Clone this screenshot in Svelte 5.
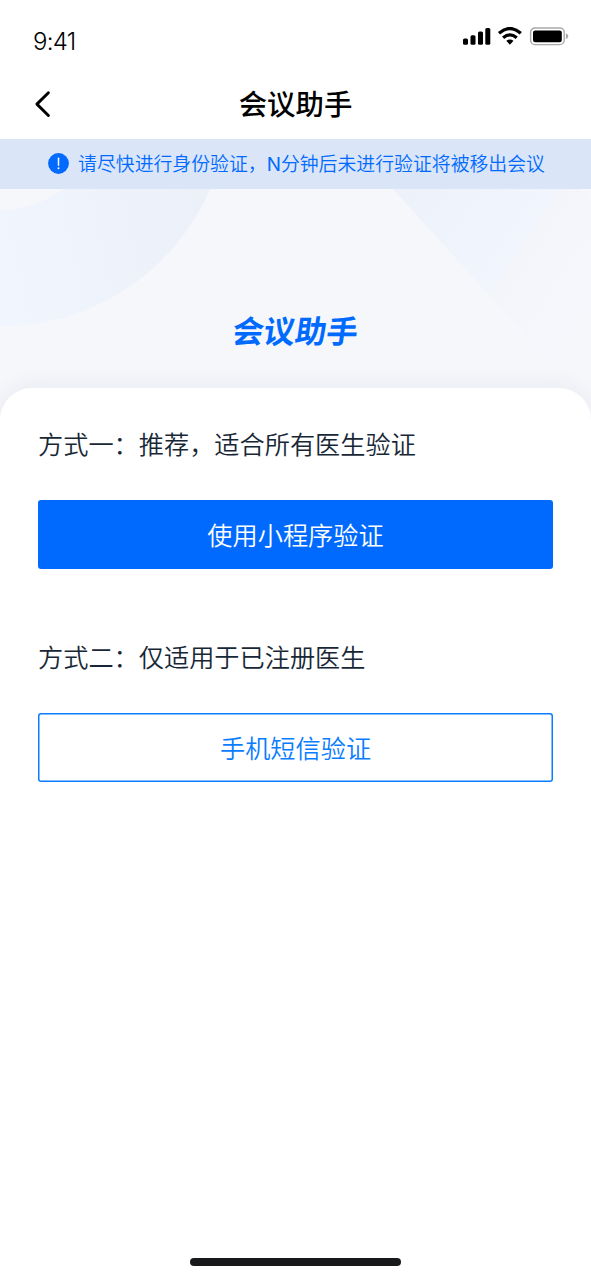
<script>
  const methods = [
    { label: '方式一：推荐，适合所有医生验证', action: '使用小程序验证', primary: true },
    { label: '方式二：仅适用于已注册医生', action: '手机短信验证', primary: false }
  ];
</script>

<div class="screen">
  <header>
    <div class="status">
      <span class="time">9:41</span>
      <svg class="indicators" width="108" height="20" viewBox="0 0 108 20">
        <rect x="1" y="11.5" width="5" height="6.2" rx="1.5" />
        <rect x="8.5" y="8.3" width="5" height="9.4" rx="1.5" />
        <rect x="16" y="4.6" width="5" height="13.1" rx="1.5" />
        <rect x="23.3" y="1" width="5" height="16.7" rx="1.5" />
        <g fill="none" stroke="#000" stroke-width="3.3">
          <path d="M37 6.3Q47.9 -3.2 58.8 6.3" />
          <path d="M41.1 10.8Q47.9 4.9 54.7 10.8" />
        </g>
        <path d="M44.3 13.8Q47.9 11 51.5 13.8L47.9 17.7Z" />
        <rect x="68.6" y="1" width="33.6" height="16.6" rx="4.3" fill="none" stroke="#a9a9a9" stroke-width="1.4" />
        <rect x="71" y="3.4" width="28.8" height="11.9" rx="2.2" />
        <path d="M103.9 6.3Q106.2 7.2 106.2 9.3T103.9 12.3Z" fill="#a9a9a9" />
      </svg>
    </div>
    <div class="nav">
      <svg class="back" width="18" height="28" viewBox="0 0 18 28">
        <path d="M15.4 2.8L3.9 14.1L15.4 25.5" fill="none" stroke="#000" stroke-width="2.9" stroke-linecap="round" stroke-linejoin="round" />
      </svg>
      <h1>会议助手</h1>
    </div>
  </header>

  <div class="notice">
    <svg width="21" height="21" viewBox="0 0 21 21">
      <circle cx="10.5" cy="10.5" r="10.4" fill="#006aff" />
      <path d="M10.5 5.2V12.3" stroke="#fff" stroke-width="1.5" stroke-linecap="round" />
      <circle cx="10.5" cy="15.3" r="1" fill="#fff" />
    </svg>
    <span class="notice-text">请尽快进行身份验证，<span class="latin">N</span>分钟后未进行验证将被移出会议</span>
  </div>

  <section class="hero">
    <svg class="shapes" width="591" height="240" viewBox="0 189 591 240">
      <defs>
        <linearGradient id="ring" gradientUnits="userSpaceOnUse" x1="10" y1="300" x2="210" y2="260">
          <stop offset="0" stop-color="#f1f5fe" />
          <stop offset="0.55" stop-color="#eef3fb" />
          <stop offset="1" stop-color="#ecf0f9" />
        </linearGradient>
        <linearGradient id="wedge" gradientUnits="userSpaceOnUse" x1="393" y1="189" x2="594" y2="320">
          <stop offset="0" stop-color="#edf1fa" />
          <stop offset="0.3" stop-color="#eff3fb" />
          <stop offset="0.56" stop-color="#f1f5fe" />
          <stop offset="0.58" stop-color="#f3f5fa" />
          <stop offset="0.77" stop-color="#f4f6fb" />
          <stop offset="1" stop-color="#f5f7fb" />
        </linearGradient>
      </defs>
      <path d="M63 189H210A226 226 0 0 1 0 326V210A111 111 0 0 0 63 189Z" fill="url(#ring)" />
      <path d="M393 189H578L591 202V330L564 370Q559 373 553 365Z" fill="url(#wedge)" />
    </svg>
    <h2>会议助手</h2>
  </section>

  <main>
    {#each methods as method}
      <div class="method">
        <p>{method.label}</p>
        <button class:primary={method.primary}>{method.action}</button>
      </div>
    {/each}
  </main>

  <footer><div class="home"></div></footer>
</div>

<style>
  :global(body) {
    margin: 0;
    background: #fff;
  }
  .screen {
    display: flex;
    flex-direction: column;
    width: 591px;
    height: 1280px;
    overflow: hidden;
    font-family: 'Noto Sans CJK SC', sans-serif;
    background: #fff;
  }
  header {
    height: 139px;
    flex: none;
  }
  .status {
    display: flex;
    justify-content: space-between;
    height: 70px;
    padding: 0 21px 0 33px;
    box-sizing: border-box;
  }
  .time {
    margin-top: 27px;
    font: 300 24px/30px Inter, sans-serif;
    letter-spacing: -0.7px;
  }
  .indicators {
    margin-top: 27px;
  }
  .nav {
    display: grid;
    grid-template-columns: 60px 1fr 60px;
    align-items: center;
    height: 68px;
  }
  .back {
    margin-left: 33px;
  }
  h1 {
    margin: 0;
    padding-bottom: 2px;
    text-align: center;
    font-size: 28.4px;
    line-height: 38px;
    font-weight: 500;
    color: #000;
  }
  .notice {
    display: flex;
    align-items: center;
    justify-content: center;
    gap: 9px;
    flex: none;
    box-sizing: border-box;
    height: 50px;
    padding: 0 0 1px 2px;
    background: #dae5f7;
    color: #006aff;
    font-size: 18.88px;
    font-weight: 350;
    line-height: 28px;
    white-space: nowrap;
  }
  .latin {
    font-family: Inter, sans-serif;
    font-weight: 400;
  }
  .hero {
    display: grid;
    flex: none;
    height: 240px;
    background: #f5f7fb;
  }
  .shapes,
  h2 {
    grid-area: 1 / 1;
  }
  h2 {
    height: 48px;
    margin: 117px 0 0;
    text-align: center;
    font-size: 31.4px;
    line-height: 48px;
    font-weight: 700;
    color: #006aff;
    transform: skewX(-8deg);
  }
  main {
    display: flex;
    flex-direction: column;
    gap: 68px;
    flex: 1;
    margin-top: -41px;
    padding: 36px 38px 0;
    border-radius: 32px 32px 0 0;
    background: #fff;
    box-shadow: 0 -2px 24px rgba(30, 40, 60, 0.06);
    z-index: 1;
  }
  p {
    margin: 0 0 38px;
    font-size: 25.2px;
    line-height: 38px;
    font-weight: 350;
    color: #172736;
  }
  button {
    display: block;
    box-sizing: border-box;
    width: 515px;
    height: 69px;
    padding: 0 0 1px;
    border: 0;
    border-radius: 3px;
    background: #fff;
    box-shadow: inset 0 0 0 1.5px #0a7cff;
    color: #0a7cff;
    font: 350 25.2px/38px 'Noto Sans CJK SC', sans-serif;
  }
  .primary {
    background: #006aff;
    box-shadow: none;
    color: #fff;
  }
  footer {
    display: flex;
    justify-content: center;
    height: 22px;
    flex: none;
    background: #fff;
    z-index: 2;
  }
  .home {
    width: 211px;
    height: 8px;
    border-radius: 4px;
    background: #17191b;
  }
</style>
